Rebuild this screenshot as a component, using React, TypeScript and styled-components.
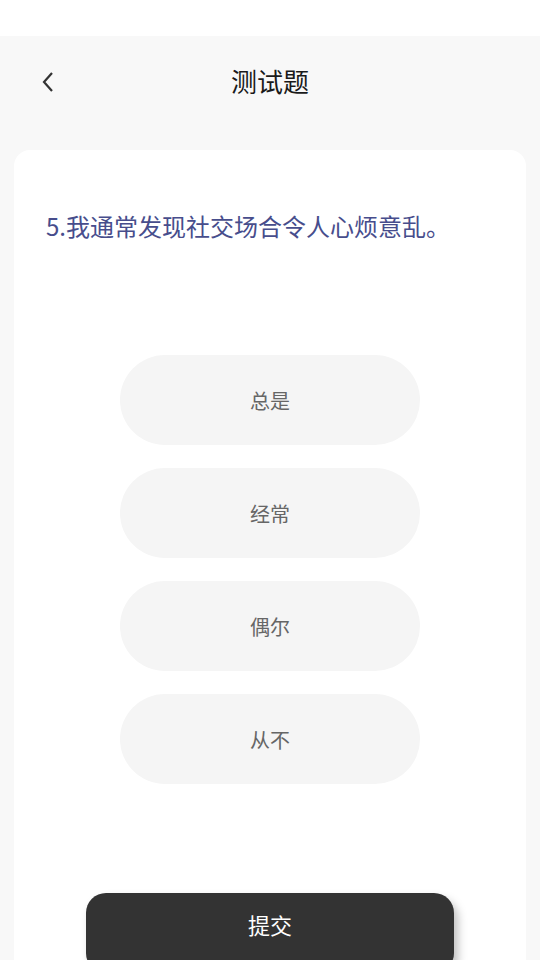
import React from "react";
import styled, { createGlobalStyle } from "styled-components";

const Global = createGlobalStyle`
  html, body {
    margin: 0;
    padding: 0;
    background: #f8f8f8;
    font-family: "Noto Sans CJK SC", "Noto Sans", sans-serif;
    overflow: hidden;
  }
  * { box-sizing: border-box; }
`;

const Page = styled.div`
  width: 540px;
  height: 960px;
  display: flex;
  flex-direction: column;
  background: #f8f8f8;
  overflow: hidden;
`;

const StatusBar = styled.div`
  height: 36px;
  background: #ffffff;
  flex-shrink: 0;
`;

const Header = styled.div`
  height: 92px;
  display: flex;
  align-items: center;
  justify-content: center;
  position: relative;
  flex-shrink: 0;
`;

const BackButton = styled.button`
  position: absolute;
  left: 36px;
  top: 50%;
  transform: translateY(-50%);
  width: 24px;
  height: 32px;
  padding: 0;
  border: none;
  background: transparent;
  display: flex;
  align-items: center;
  justify-content: center;
`;

const Title = styled.h1`
  margin: 0 0 2px;
  font-size: 26px;
  font-weight: 400;
  color: #1a1a1a;
  line-height: 1;
`;

const Card = styled.div`
  margin: 22px 14px 0;
  background: #ffffff;
  border-radius: 16px;
  padding: 58px 32px 120px;
  display: flex;
  flex-direction: column;
  align-items: stretch;
`;

const Question = styled.p`
  margin: 0;
  font-size: 24px;
  line-height: 35px;
  color: #474d8c;
  font-weight: 400;
`;

const Options = styled.div`
  margin-top: 112px;
  display: flex;
  flex-direction: column;
  align-items: center;
  gap: 23px;
`;

const Option = styled.button`
  width: 300px;
  height: 90px;
  border-radius: 45px;
  border: none;
  background: #f5f5f5;
  color: #666666;
  font-family: inherit;
  font-size: 20px;
  display: flex;
  align-items: center;
  justify-content: center;
`;

const Submit = styled.button`
  margin: 109px auto 0;
  width: 368px;
  height: 80px;
  border-radius: 20px;
  border: none;
  background: #333333;
  color: #ffffff;
  font-family: inherit;
  font-size: 22px;
  display: flex;
  align-items: flex-start;
  justify-content: center;
  padding-top: 15px;
  box-shadow: 4px 6px 10px rgba(0, 0, 0, 0.25);
`;

const options = ["总是", "经常", "偶尔", "从不"];

export default function App() {
  return (
    <Page>
      <Global />
      <StatusBar />
      <Header>
        <BackButton aria-label="返回">
          <svg width="16" height="24" viewBox="0 0 16 24" fill="none">
            <path d="M12 3 L4 12 L12 21" stroke="#333" strokeWidth="2.2" strokeLinecap="butt" strokeLinejoin="miter" />
          </svg>
        </BackButton>
        <Title>测试题</Title>
      </Header>
      <Card>
        <Question>5.我通常发现社交场合令人心烦意乱。</Question>
        <Options>
          {options.map((o) => (
            <Option key={o}>{o}</Option>
          ))}
        </Options>
        <Submit>提交</Submit>
      </Card>
    </Page>
  );
}
